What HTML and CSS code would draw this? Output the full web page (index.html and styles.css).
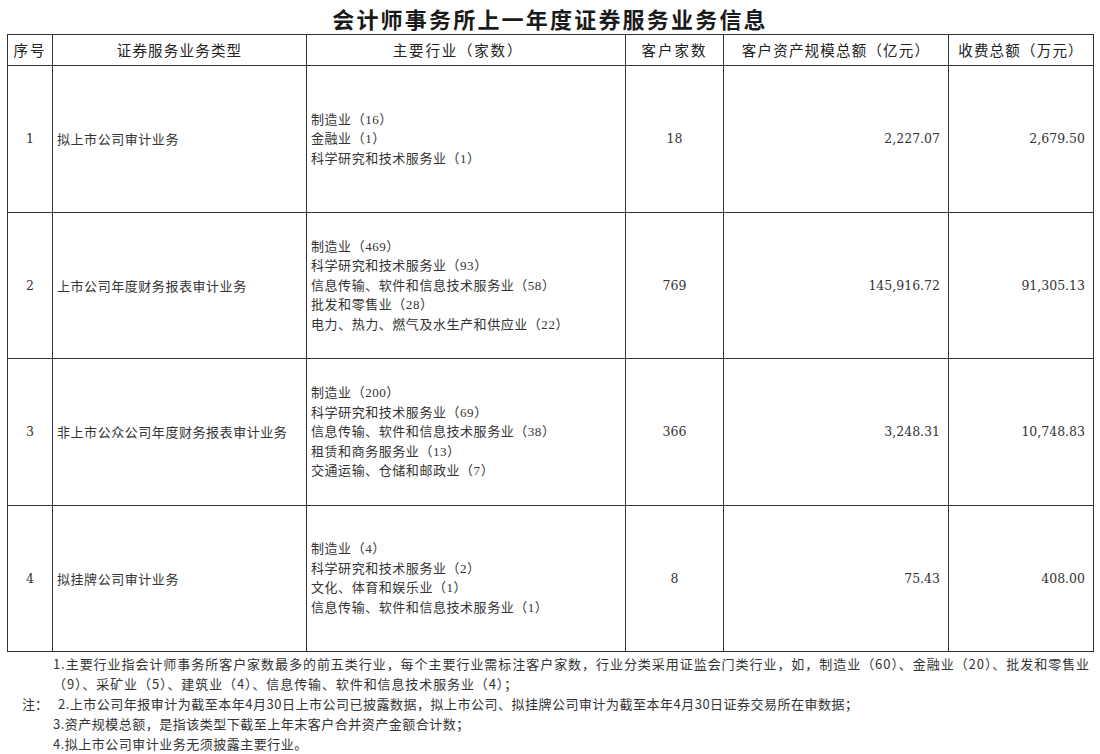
FILE: index.html
```html
<!DOCTYPE html>
<html lang="zh-CN">
<head>
<meta charset="utf-8">
<title>会计师事务所上一年度证券服务业务信息</title>
<link rel="stylesheet" href="styles.css">
</head>
<body>
<div class="page">
  <h1 class="title">会计师事务所上一年度证券服务业务信息</h1>
  <table class="info">
    <colgroup>
      <col class="c-no"><col class="c-type"><col class="c-ind"><col class="c-cnt"><col class="c-asset"><col class="c-fee">
    </colgroup>
    <thead>
      <tr>
        <th class="h-no">序号</th>
        <th>证券服务业务类型</th>
        <th class="h-ind">主要行业（家数）</th>
        <th class="h-cnt">客户家数</th>
        <th>客户资产规模总额（亿元）</th>
        <th>收费总额（万元）</th>
      </tr>
    </thead>
    <tbody>
      <tr>
        <td class="num center">1</td>
        <td class="type">拟上市公司审计业务</td>
        <td class="ind">制造业（16）<br>金融业（1）<br>科学研究和技术服务业（1）</td>
        <td class="num center">18</td>
        <td class="num right">2,227.07</td>
        <td class="num right">2,679.50</td>
      </tr>
      <tr>
        <td class="num center">2</td>
        <td class="type">上市公司年度财务报表审计业务</td>
        <td class="ind">制造业（469）<br>科学研究和技术服务业（93）<br>信息传输、软件和信息技术服务业（58）<br>批发和零售业（28）<br>电力、热力、燃气及水生产和供应业（22）</td>
        <td class="num center">769</td>
        <td class="num right">145,916.72</td>
        <td class="num right">91,305.13</td>
      </tr>
      <tr>
        <td class="num center">3</td>
        <td class="type">非上市公众公司年度财务报表审计业务</td>
        <td class="ind">制造业（200）<br>科学研究和技术服务业（69）<br>信息传输、软件和信息技术服务业（38）<br>租赁和商务服务业（13）<br>交通运输、仓储和邮政业（7）</td>
        <td class="num center">366</td>
        <td class="num right">3,248.31</td>
        <td class="num right">10,748.83</td>
      </tr>
      <tr>
        <td class="num center">4</td>
        <td class="type">拟挂牌公司审计业务</td>
        <td class="ind">制造业（4）<br>科学研究和技术服务业（2）<br>文化、体育和娱乐业（1）<br>信息传输、软件和信息技术服务业（1）</td>
        <td class="num center">8</td>
        <td class="num right">75.43</td>
        <td class="num right">408.00</td>
      </tr>
    </tbody>
  </table>
  <div class="notes">
    <div class="notes-label">注：</div>
    <div class="notes-body">
      <p class="justify">1.主要行业指会计师事务所客户家数最多的前五类行业，每个主要行业需标注客户家数，行业分类采用证监会门类行业，如，制造业（60）、金融业（20）、批发和零售业（9）、采矿业（5）、建筑业（4）、信息传输、软件和信息技术服务业（4）；</p>
      <p class="shift">2.上市公司年报审计为截至本年4月30日上市公司已披露数据，拟上市公司、拟挂牌公司审计为截至本年4月30日证券交易所在审数据；</p>
      <p>3.资产规模总额，是指该类型下截至上年末客户合并资产金额合计数；</p>
      <p>4.拟上市公司审计业务无须披露主要行业。</p>
    </div>
  </div>
</div>
</body>
</html>
```

FILE: styles.css
```css
* { box-sizing: border-box; }
html, body { margin: 0; padding: 0; background: #fff; }
body {
  font-family: "Liberation Serif", "Noto Sans CJK SC", serif;
  color: #2b2b2b;
}
.page {
  width: 1100px;
  padding: 3px 7px 0 7px;
}
.title {
  margin: 0;
  height: 31px;
  line-height: 31px;
  text-align: center;
  font-family: "Noto Sans CJK SC", sans-serif;
  font-size: 22px;
  font-weight: 700;
  letter-spacing: 2.2px;
  color: #1a1a1a;
}
.info {
  width: 1086px;
  border-collapse: collapse;
  table-layout: fixed;
}
.c-no { width: 45px; }
.c-type { width: 254px; }
.c-ind { width: 319px; }
.c-cnt { width: 98px; }
.c-asset { width: 225px; }
.c-fee { width: 145px; }
.info th, .info td {
  border: 1px solid #333;
  padding: 0;
}
.info thead tr { height: 31px; }
.info th {
  font-family: "Noto Sans CJK SC", sans-serif;
  font-weight: 400;
  font-size: 14.5px;
  letter-spacing: 1.2px;
  color: #222;
  text-align: center;
  vertical-align: middle;
  line-height: 20px;
}
.info th.h-no { letter-spacing: 2px; }
.info th.h-cnt { letter-spacing: 2px; }
.info th.h-ind { letter-spacing: 1.8px; padding-right: 16px; }
.info tbody tr { height: 146.5px; }
.info td {
  vertical-align: middle;
  font-size: 13px;
  color: #333;
}
.info td.type {
  padding-left: 4px;
  font-family: "Noto Sans CJK SC", sans-serif;
  letter-spacing: 0.55px;
}
.info td.ind {
  padding-left: 4px;
  line-height: 19.5px;
  font-family: "Liberation Serif", "Noto Sans CJK SC", serif;
  letter-spacing: 0.55px;
}
.info td.num {
  font-family: "DejaVu Serif", "Liberation Serif", serif;
  font-size: 12.5px;
  color: #333;
}
.info td.center { text-align: center; }
.info td.right { text-align: right; padding-right: 8px; }
.notes {
  display: flex;
  margin-top: 2px;
  width: 1083px;
  font-size: 13px;
  line-height: 20px;
  color: #333;
}
.notes-label {
  flex: 0 0 46px;
  align-self: center;
  padding-left: 15px;
  font-family: "Noto Sans CJK SC", sans-serif;
}
.notes-body {
  flex: 1 1 auto;
  min-width: 0;
  font-family: "Noto Sans CJK SC", sans-serif;
  letter-spacing: 0.5px;
}
.notes-body p { margin: 0; }
.notes-body p.justify { text-align: justify; letter-spacing: 0.9px; }
.notes-body p.shift { padding-left: 5px; }
```
